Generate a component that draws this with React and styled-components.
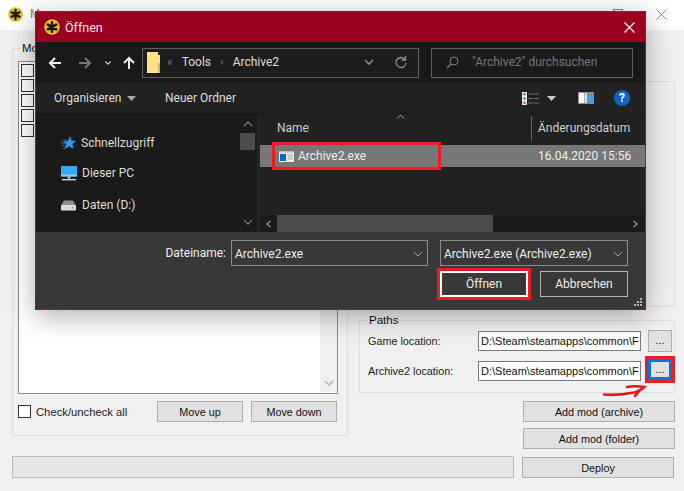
import React from "react";
import styled, { createGlobalStyle } from "styled-components";

const Global = createGlobalStyle`
  html, body { margin: 0; padding: 0; background: #f0f0f0; }
  body { font-family: "Liberation Sans", Arial, sans-serif; font-size: 10.8px; color: #111; }
`;

const Page = styled.div`
  position: relative;
  width: 684px;
  height: 491px;
  overflow: hidden;
  background: #f0f0f0;
`;
const TitleBar = styled.div`
  height: 30px;
  background: #fff;
  display: flex;
  align-items: center;
  padding: 0 17px 2px 8px;
  box-sizing: border-box;
  gap: 7px;
  color: #777;
  font-size: 12px;
`;
const TitleControls = styled.div`
  margin-left: auto;
  display: flex;
  gap: 33px;
  align-items: center;
`;
const Columns = styled.div`
  display: grid;
  grid-template-columns: 336px 316px;
  gap: 11px;
  padding: 18px 0 0 12px;
`;
const Group = styled.fieldset`
  margin: 0;
  padding: 0;
  border: 1px solid #dcdcdc;
  min-width: 0;
  box-sizing: border-box;
  position: relative;
`;
const GroupLabel = styled.span`
  position: absolute;
  top: -7px;
  left: ${(p) => p.$left}px;
  background: #f0f0f0;
  padding: 0 1px;
  font-size: 11.5px;
  color: #111;
`;
const ModsGroup = styled(Group)`
  height: 388px;
  padding: 12px 9px 0 5px;
`;
const ListBox = styled.div`
  height: 333px;
  background: #fff;
  border: 1px solid #8a8a8a;
  box-sizing: border-box;
  display: flex;
  justify-content: space-between;
  padding: 2px 0 1px 2px;
`;
const CheckColumn = styled.div`
  display: flex;
  flex-direction: column;
  gap: 2px;
`;
const Check = styled.span`
  display: block;
  box-sizing: border-box;
  width: 13px;
  height: 13px;
  background: #fff;
  border: 1px solid #333;
`;
const ListScroll = styled.div`
  width: 17px;
  background: #f0f0f0;
  display: flex;
  flex-direction: column;
  justify-content: flex-end;
  align-items: center;
  padding-bottom: 5px;
`;
const ListFooter = styled.div`
  display: flex;
  align-items: center;
  margin-top: 7px;
`;
const CheckAll = styled.label`
  display: flex;
  align-items: center;
  gap: 5px;
  width: 139px;
  font-size: 11.25px;
  color: #1a1a2a;
`;
const Btn = styled.div`
  box-sizing: border-box;
  flex: none;
  height: ${(p) => p.$h || 21}px;
  width: ${(p) => p.$w || 86}px;
  margin-left: ${(p) => p.$ml || 0}px;
  background: #e1e1e1;
  border: 1px solid #adadad;
  display: flex;
  align-items: center;
  justify-content: center;
  color: #111;
`;
const RightColumn = styled.div`
  display: flex;
  flex-direction: column;
  align-items: flex-end;
`;
const UpperGroup = styled(Group)`
  width: 100%;
  height: 226px;
  margin-top: 33px;
`;
const PathsGroup = styled(Group)`
  width: 100%;
  height: 73px;
  margin-top: 13px;
  padding: 10px 2px 0 8px;
  display: flex;
  flex-direction: column;
  gap: 9px;
`;
const PathRow = styled.div`
  display: flex;
  align-items: flex-start;
  height: 21px;
`;
const PathLabel = styled.span`
  width: 110px;
  flex: none;
  line-height: 20px;
  color: #222;
`;
const PathInput = styled.div`
  box-sizing: border-box;
  flex: none;
  width: 163px;
  height: 20px;
  background: #fff;
  border: 1px solid #7a7a7a;
  padding: 0 2px;
  line-height: 18px;
  white-space: nowrap;
  overflow: hidden;
  color: #111;
  font-size: 11px;
`;
const DotsBtn = styled(Btn)`
  width: 24px;
  height: 22px;
  margin-left: 7px;
  margin-top: -1px;
  padding-bottom: 2px;
`;
const ActiveDots = styled(DotsBtn)`
  height: 21px;
  margin-top: -2px;
  border: 3px solid #0078d7;
  outline: 3px solid #ed1c24;
`;
const RedArrow = styled.svg`
  position: absolute;
  left: 243px;
  top: 64px;
`;
const AddBtn = styled(Btn)`
  margin-top: ${(p) => p.$mt}px;
`;
const BottomBar = styled.div`
  display: flex;
  align-items: flex-end;
  gap: 8px;
  padding: 7px 0 0 12px;
`;
const Progress = styled.div`
  box-sizing: border-box;
  width: 502px;
  height: 22px;
  background: #e6e6e6;
  border: 1px solid #bcbcbc;
`;

/* ---------- dialog ---------- */
const Dialog = styled.div`
  position: absolute;
  left: 35px;
  top: 11px;
  width: 611px;
  height: 299px;
  box-sizing: border-box;
  border: 1px solid #a8102f;
  background: #1a1a1a;
  box-shadow: 0 6px 26px rgba(0, 0, 0, 0.32);
  display: flex;
  flex-direction: column;
  color: #eee;
  font-family: Roboto, "Noto Sans", sans-serif;
  font-size: 12px;
`;
const DialogTitle = styled.div`
  height: 30px;
  flex: none;
  background: #9b0020;
  display: flex;
  align-items: center;
  padding: 0 10px 0 8px;
  gap: 5px;
  font-size: 12.5px;
  color: #f3e4e6;
`;
const DialogClose = styled.div`
  margin-left: auto;
  display: flex;
`;
const NavBar = styled.div`
  height: 41px;
  flex: none;
  background: #191919;
  display: flex;
  align-items: center;
  padding: 0 12px;
`;
const NavIcons = styled.div`
  display: flex;
  width: 94px;
  align-items: center;
`;
const NavSlot = styled.span`
  display: flex;
  margin-left: ${(p) => p.$ml || 0}px;
`;
const AddressBox = styled.div`
  box-sizing: border-box;
  width: 277px;
  height: 30px;
  border: 1px solid #606060;
  display: flex;
  align-items: center;
  padding: 0 0 1px 4px;
  background: #1c1c1c;
  color: #ddd;
`;
const Crumb = styled.span`
  margin-left: ${(p) => p.$ml}px;
  color: ${(p) => p.$c || "#ddd"};
  font-size: ${(p) => p.$fs || 12}px;
`;
const AddressEnd = styled.div`
  margin-left: auto;
  width: 65px;
  height: 100%;
  display: flex;
  align-items: center;
  justify-content: space-around;
`;
const SearchBox = styled.div`
  box-sizing: border-box;
  width: 202px;
  height: 30px;
  margin-left: 12px;
  border: 1px solid #606060;
  display: flex;
  align-items: center;
  gap: 13px;
  padding: 0 0 1px 14px;
  color: #767676;
  background: #1a1a1a;
`;
const CommandBar = styled.div`
  height: 31px;
  flex: none;
  box-sizing: border-box;
  background: #222;
  border-bottom: 1px solid #171717;
  display: flex;
  align-items: center;
  padding: 0 15px 0 18px;
  color: #ddd;
`;
const CommandItem = styled.span`
  display: flex;
  align-items: center;
  gap: 6px;
  width: ${(p) => p.$w}px;
`;
const CommandIcons = styled.div`
  margin-left: auto;
  display: flex;
  align-items: center;
`;
const IconGap = styled.span`
  width: ${(p) => p.$w}px;
`;
const Main = styled.div`
  height: 118px;
  flex: none;
  display: flex;
  background: #1a1a1a;
`;
const Sidebar = styled.div`
  width: 204px;
  flex: none;
  padding: 19px 0 0 25px;
  box-sizing: border-box;
  display: flex;
  flex-direction: column;
`;
const SideItem = styled.div`
  display: flex;
  align-items: center;
  gap: ${(p) => p.$gap}px;
  height: 20px;
  margin-bottom: ${(p) => p.$mb}px;
  color: #ddd;
`;
const SideScroll = styled.div`
  width: 15px;
  flex: none;
  display: flex;
  flex-direction: column;
  align-items: center;
  padding-top: 6px;
  box-sizing: border-box;
`;
const SideThumb = styled.div`
  width: 15px;
  height: 17px;
  background: #4d4d4d;
  margin: 5px 0 68px;
`;
const Splitter = styled.div`
  width: 3px;
  margin-left: 2px;
  flex: none;
  background: #242424;
`;
const ListPane = styled.div`
  flex: 1;
  min-width: 0;
  background: #212121;
  display: flex;
  flex-direction: column;
`;
const HeaderRow = styled.div`
  position: relative;
  height: 29px;
  display: flex;
  align-items: center;
  padding-bottom: 1px;
  box-sizing: border-box;
  color: #cfcfcf;
`;
const NameHead = styled.span`
  width: 271px;
  padding-left: 17px;
  box-sizing: border-box;
`;
const HeadSplit = styled.span`
  width: 1px;
  height: 25px;
  background: #5f5f5f;
  margin: 0 6px 0 0;
`;
const SortMark = styled.svg`
  position: absolute;
  left: 136px;
  top: 0;
`;
const FileRow = styled.div`
  height: 22px;
  margin-top: 2px;
  flex: none;
  background: #777;
  display: flex;
  align-items: center;
  color: #eee;
`;
const FileName = styled.div`
  box-sizing: border-box;
  width: 163px;
  height: 22px;
  margin-left: 15px;
  padding-left: 4px;
  outline: 3px solid #ed1c24;
  display: flex;
  align-items: center;
  gap: 4px;
`;
const FileDate = styled.span`
  margin-left: 100px;
`;
const HScroll = styled.div`
  margin-top: auto;
  height: 17px;
  display: flex;
  align-items: center;
  background: #1a1a1a;
`;
const HThumb = styled.div`
  width: 216px;
  height: 100%;
  background: #4d4d4d;
`;
const ScrollEnd = styled.div`
  margin-left: auto;
  padding-right: 5px;
  display: flex;
`;
const ScrollStart = styled.div`
  width: 17px;
  display: flex;
  justify-content: center;
`;
const Footer = styled.div`
  flex: 1;
  position: relative;
  background: #383838;
  padding: 8px 17px 0 0;
  display: flex;
  flex-direction: column;
`;
const FooterRow = styled.div`
  display: flex;
  align-items: center;
  justify-content: flex-end;
  margin-top: ${(p) => p.$mt || 0}px;
`;
const FileLabel = styled.span`
  margin-right: 5px;
  color: #eee;
`;
const Combo = styled.div`
  box-sizing: border-box;
  width: ${(p) => p.$w}px;
  height: 26px;
  margin-left: ${(p) => p.$ml || 0}px;
  border: 1px solid #8c8c8c;
  background: #383838;
  display: flex;
  align-items: center;
  justify-content: space-between;
  padding: 1px 4px 0 3px;
  color: #eee;
`;
const DialogBtn = styled.div`
  box-sizing: border-box;
  width: 88px;
  height: 26px;
  margin-left: ${(p) => p.$ml || 0}px;
  border: ${(p) => (p.$primary ? "2px solid #fff" : "1px solid #b5b5b5")};
  outline: ${(p) => (p.$primary ? "3px solid #ed1c24" : "none")};
  display: flex;
  align-items: center;
  justify-content: center;
  color: #eee;
`;
const Grip = styled.svg`
  position: absolute;
  right: 3px;
  bottom: 3px;
`;
const HelpBadge = styled.span`
  width: 16px;
  height: 16px;
  border-radius: 50%;
  background: #0f63c8;
  color: #fff;
  font-weight: 700;
  font-size: 12px;
  display: flex;
  align-items: center;
  justify-content: center;
  margin-left: 20px;
`;

const Logo = ({ size }) => (
  <svg width={size} height={size} viewBox="0 0 16 16">
    <circle cx="8" cy="8" r="7.8" fill="#e8bb2a" />
    <g stroke="#1b1b14" strokeWidth="2.5" strokeLinecap="round">
      <path d="M8 3.2v9.6M3.8 5.6l8.4 4.8M12.2 5.6l-8.4 4.8" />
    </g>
  </svg>
);
const Chev = ({ d, c = "#8a8a8a", w = 10, h = 8, sw = 1.6 }) => (
  <svg width={w} height={h} viewBox="0 0 10 8">
    <path d={d} fill="none" stroke={c} strokeWidth={sw} />
  </svg>
);
const NavArrow = ({ d, c }) => (
  <svg width="14" height="14" viewBox="0 0 14 14">
    <path d={d} fill="none" stroke={c} strokeWidth="2" />
  </svg>
);
const Triangle = ({ c }) => (
  <svg width="9" height="5" viewBox="0 0 9 5">
    <path d="M0 0h9L4.5 5z" fill={c} />
  </svg>
);
const Folder = () => (
  <svg width="14" height="21" viewBox="0 0 14 21">
    <path d="M0 0h11v3h2v18H0z" fill="#ffe28a" />
    <path d="M11 11h2v10h-2z" fill="#d9b452" />
  </svg>
);
const StarIcon = () => (
  <svg width="15" height="14" viewBox="0 0 15 14">
    <path d="M9 0l1.6 4.6L15 5l-3.6 2.9L12.6 13 8 10.3 3.8 13l1.3-5L2 5.4l5-.4z" fill="#2f97e8" />
    <path d="M0 7h4M1 9.5h3M2 12h2M2 4h4" stroke="#1c6fb5" />
  </svg>
);
const MonitorIcon = () => (
  <svg width="16" height="15" viewBox="0 0 16 15">
    <rect width="16" height="10.5" fill="#35a9ee" />
    <rect y="8.5" width="16" height="2" fill="#7fd0f8" />
    <path d="M6.5 10.5h3v2h-3z" fill="#b9c4cc" />
    <path d="M1 13h14v1.4H1z" fill="#d5dde2" />
  </svg>
);
const DriveIcon = () => (
  <svg width="15" height="12" viewBox="0 0 15 12">
    <path d="M3 1.5h9l3 5H0z" fill="#8d8d8d" />
    <rect y="6" width="15" height="5.5" rx="1" fill="#dcdcdc" />
    <rect x="10.5" y="8" width="2" height="1.6" fill="#3fc14d" />
  </svg>
);
const ExeIcon = () => (
  <svg width="15" height="11" viewBox="0 0 15 11">
    <rect width="15" height="11" fill="#ececec" />
    <rect y="0" width="15" height="1.5" fill="#bdbdbd" />
    <rect x="1" y="3" width="6" height="7" fill="#1265c4" />
    <path d="M8.5 4H14M8.5 6H14M8.5 8H14" stroke="#aaa" />
  </svg>
);
const ViewIcon = () => (
  <svg width="17" height="13" viewBox="0 0 17 13">
    <rect width="5" height="13" fill="#e8e8e8" />
    <rect x="1.5" y="1.2" width="2" height="2" fill="#555" />
    <rect x="1.5" y="5.5" width="2" height="2" fill="#2a5ea8" />
    <rect x="1.5" y="9.8" width="2" height="2" fill="#b32636" />
    <path d="M6 2h5M12 2h5M6 6.5h5M12 6.5h5M6 11h5M12 11h5" stroke="#6f6f6f" />
  </svg>
);
const PaneIcon = () => (
  <svg width="16" height="12" viewBox="0 0 16 12">
    <rect width="16" height="12" fill="#8a8a8a" />
    <rect x="1" y="1" width="5" height="10" fill="#fff" />
    <rect x="6.5" y="1" width="2.5" height="10" fill="#dcdcdc" />
    <rect x="10" y="2" width="5" height="9" fill="#4a9be0" />
  </svg>
);

export default function App() {
  return (
    <Page>
      <Global />
      <TitleBar>
        <Logo size={15} />
        <span>M</span>
        <TitleControls>
          <svg width="10" height="10" viewBox="0 0 10 10">
            <rect x=".5" y=".5" width="9" height="9" fill="none" stroke="#888" />
          </svg>
          <svg width="11" height="11" viewBox="0 0 11 11">
            <path d="M.5.5l10 10M10.5.5l-10 10" stroke="#888" />
          </svg>
        </TitleControls>
      </TitleBar>
      <Columns>
        <ModsGroup>
          <GroupLabel $left={8}>Mods</GroupLabel>
          <ListBox>
            <CheckColumn>
              {[0, 1, 2, 3, 4].map((i) => (
                <Check key={i} />
              ))}
            </CheckColumn>
            <ListScroll>
              <Chev d="M1 2l4 4 4-4" c="#b5b5b5" />
            </ListScroll>
          </ListBox>
          <ListFooter>
            <CheckAll>
              <Check />
              Check/uncheck all
            </CheckAll>
            <Btn>Move up</Btn>
            <Btn $ml={8}>Move down</Btn>
          </ListFooter>
        </ModsGroup>
        <RightColumn>
          <UpperGroup />
          <PathsGroup>
            <GroupLabel $left={8}>Paths</GroupLabel>
            <PathRow>
              <PathLabel>Game location:</PathLabel>
              <PathInput>D:\Steam\steamapps\common\F</PathInput>
              <DotsBtn>...</DotsBtn>
            </PathRow>
            <PathRow>
              <PathLabel>Archive2 location:</PathLabel>
              <PathInput>D:\Steam\steamapps\common\F</PathInput>
              <ActiveDots>...</ActiveDots>
            </PathRow>
            <RedArrow width="44" height="13" viewBox="0 0 44 13">
              <path d="M1 9.5c10 1 20 0 30-2 4-1 7-3 10-5M24 2c6-1 11-1 17 0-3 2-6 5-9 9" fill="none" stroke="#e8141c" strokeWidth="2.6" strokeLinecap="round" />
            </RedArrow>
          </PathsGroup>
          <AddBtn $w={152} $mt={8}>Add mod (archive)</AddBtn>
          <AddBtn $w={152} $mt={6}>Add mod (folder)</AddBtn>
        </RightColumn>
      </Columns>
      <BottomBar>
        <Progress />
        <Btn $w={152}>Deploy</Btn>
      </BottomBar>

      <Dialog>
        <DialogTitle>
          <Logo size={16} />
          Öffnen
          <DialogClose>
            <svg width="11" height="11" viewBox="0 0 11 11">
              <path d="M.5.5l10 10M10.5.5l-10 10" stroke="#fff" strokeWidth="1.2" />
            </svg>
          </DialogClose>
        </DialogTitle>
        <NavBar>
          <NavIcons>
            <NavSlot>
              <NavArrow d="M13 7H2M7 2L2 7l5 5" c="#f2f2f2" />
            </NavSlot>
            <NavSlot $ml={16}>
              <NavArrow d="M1 7h11M7 2l5 5-5 5" c="#777" />
            </NavSlot>
            <NavSlot $ml={12}>
              <Chev d="M1.5 2l3.5 3.5L8.5 2" c="#ccc" w={8} h={6} />
            </NavSlot>
            <NavSlot $ml={10}>
              <NavArrow d="M7 13V2M2 7l5-5 5 5" c="#f2f2f2" />
            </NavSlot>
          </NavIcons>
          <AddressBox>
            <Folder />
            <Crumb $ml={6} $c="#777" $fs={12}>«</Crumb>
            <Crumb $ml={9}>Tools</Crumb>
            <Crumb $ml={9} $c="#777" $fs={12}>›</Crumb>
            <Crumb $ml={9}>Archive2</Crumb>
            <AddressEnd>
              <Chev d="M1 2l4 4 4-4" c="#8a8a8a" />
              <svg width="12" height="13" viewBox="0 0 12 13">
                <path d="M10 3.5A5 5 0 1 0 11 7M10.5 0v4h-4" fill="none" stroke="#8a8a8a" strokeWidth="1.4" />
              </svg>
            </AddressEnd>
          </AddressBox>
          <SearchBox>
            <svg width="13" height="13" viewBox="0 0 13 13">
              <circle cx="8" cy="5" r="4" fill="none" stroke="#808080" />
              <path d="M5 8l-4 4" stroke="#808080" strokeWidth="1.3" />
            </svg>
            "Archive2" durchsuchen
          </SearchBox>
        </NavBar>
        <CommandBar>
          <CommandItem $w={111}>
            Organisieren
            <Triangle c="#aaa" />
          </CommandItem>
          <CommandItem $w={90}>Neuer Ordner</CommandItem>
          <CommandIcons>
            <ViewIcon />
            <IconGap $w={8} />
            <Triangle c="#ccc" />
            <IconGap $w={22} />
            <PaneIcon />
            <HelpBadge>?</HelpBadge>
          </CommandIcons>
        </CommandBar>
        <Main>
          <Sidebar>
            <SideItem $mb={10} $gap={5}>
              <StarIcon />
              Schnellzugriff
            </SideItem>
            <SideItem $mb={12} $gap={5}>
              <MonitorIcon />
              Dieser PC
            </SideItem>
            <SideItem $mb={0} $gap={6}>
              <DriveIcon />
              Daten (D:)
            </SideItem>
          </Sidebar>
          <SideScroll>
            <Chev d="M1 6l4-4 4 4" c="#666" />
            <SideThumb />
            <Chev d="M1 2l4 4 4-4" c="#666" />
          </SideScroll>
          <Splitter />
          <ListPane>
            <HeaderRow>
              <NameHead>Name</NameHead>
              <HeadSplit />
              Änderungsdatum
              <SortMark width="9" height="5" viewBox="0 0 9 5">
                <path d="M1 4.5L4.5 1 8 4.5" fill="none" stroke="#aaa" />
              </SortMark>
            </HeaderRow>
            <FileRow>
              <FileName>
                <ExeIcon />
                Archive2.exe
              </FileName>
              <FileDate>16.04.2020 15:56</FileDate>
            </FileRow>
            <HScroll>
              <ScrollStart>
                <Chev d="M6.5 1L3 4l3.5 3" c="#888" />
              </ScrollStart>
              <HThumb />
              <ScrollEnd>
                <Chev d="M3.5 1L7 4 3.5 7" c="#888" />
              </ScrollEnd>
            </HScroll>
          </ListPane>
        </Main>
        <Footer>
          <FooterRow>
            <FileLabel>Dateiname:</FileLabel>
            <Combo $w={197}>
              Archive2.exe
              <Chev d="M1 2l4 4 4-4" c="#aaa" sw={1} />
            </Combo>
            <Combo $w={188} $ml={12}>
              Archive2.exe (Archive2.exe)
              <Chev d="M1 2l4 4 4-4" c="#aaa" sw={1} />
            </Combo>
          </FooterRow>
          <FooterRow $mt={5}>
            <DialogBtn $primary>Öffnen</DialogBtn>
            <DialogBtn $ml={12}>Abbrechen</DialogBtn>
          </FooterRow>
          <Grip width="8" height="8" viewBox="0 0 8 8">
            <path d="M6 0h2v2H6zM3 3h2v2H3zM6 3h2v2H6zM0 6h2v2H0zM3 6h2v2H3zM6 6h2v2H6z" fill="#b5b5b5" />
          </Grip>
        </Footer>
      </Dialog>
    </Page>
  );
}
